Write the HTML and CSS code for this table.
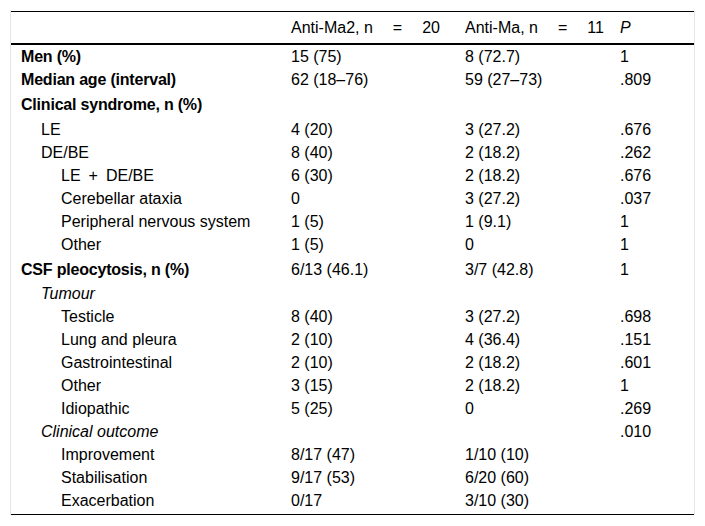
FILE: index.html
```html
<!DOCTYPE html>
<html lang="en">
<head>
<meta charset="utf-8">
<title>Anti-Ma2 vs Anti-Ma</title>
<link rel="stylesheet" href="styles.css">
</head>
<body>
<div class="frame">
  <table class="data">
    <colgroup>
      <col class="c1"><col class="c2"><col class="c3"><col class="c4">
    </colgroup>
    <thead>
      <tr>
        <th></th>
        <th>Anti-Ma2, n<span class="eq">=</span>20</th>
        <th>Anti-Ma, n<span class="eq">=</span>11</th>
        <th><i>P</i></th>
      </tr>
    </thead>
    <tbody>
      <tr class="b"><td>Men (%)</td><td>15 (75)</td><td>8 (72.7)</td><td>1</td></tr>
      <tr class="b"><td>Median age (interval)</td><td>62 (18–76)</td><td>59 (27–73)</td><td>.809</td></tr>
      <tr class="b tall"><td>Clinical syndrome, n (%)</td><td></td><td></td><td></td></tr>
      <tr><td class="l1">LE</td><td>4 (20)</td><td>3 (27.2)</td><td>.676</td></tr>
      <tr><td class="l1">DE/BE</td><td>8 (40)</td><td>2 (18.2)</td><td>.262</td></tr>
      <tr><td class="l2">LE<span class="plus">+</span>DE/BE</td><td>6 (30)</td><td>2 (18.2)</td><td>.676</td></tr>
      <tr><td class="l2">Cerebellar ataxia</td><td>0</td><td>3 (27.2)</td><td>.037</td></tr>
      <tr><td class="l2">Peripheral nervous system</td><td>1 (5)</td><td>1 (9.1)</td><td>1</td></tr>
      <tr><td class="l2">Other</td><td>1 (5)</td><td>0</td><td>1</td></tr>
      <tr class="b tall2"><td>CSF pleocytosis, n (%)</td><td>6/13 (46.1)</td><td>3/7 (42.8)</td><td>1</td></tr>
      <tr class="it"><td class="l1">Tumour</td><td></td><td></td><td></td></tr>
      <tr><td class="l2">Testicle</td><td>8 (40)</td><td>3 (27.2)</td><td>.698</td></tr>
      <tr><td class="l2">Lung and pleura</td><td>2 (10)</td><td>4 (36.4)</td><td>.151</td></tr>
      <tr><td class="l2">Gastrointestinal</td><td>2 (10)</td><td>2 (18.2)</td><td>.601</td></tr>
      <tr><td class="l2">Other</td><td>3 (15)</td><td>2 (18.2)</td><td>1</td></tr>
      <tr><td class="l2">Idiopathic</td><td>5 (25)</td><td>0</td><td>.269</td></tr>
      <tr class="it"><td class="l1">Clinical outcome</td><td></td><td></td><td>.010</td></tr>
      <tr><td class="l2">Improvement</td><td>8/17 (47)</td><td>1/10 (10)</td><td></td></tr>
      <tr><td class="l2">Stabilisation</td><td>9/17 (53)</td><td>6/20 (60)</td><td></td></tr>
      <tr class="last"><td class="l2">Exacerbation</td><td>0/17</td><td>3/10 (30)</td><td></td></tr>
    </tbody>
  </table>
</div>
</body>
</html>
```

FILE: styles.css
```css
html, body {
  margin: 0;
  padding: 0;
  background: #ffffff;
}

body {
  font-family: "Liberation Sans", Arial, Helvetica, sans-serif;
  font-size: 16px;
  color: #000000;
}

.frame {
  margin: 10px 0 0 10px;
  width: 683px;
  padding-top: 1px;
  border-left: 1px solid #e6e6e6;
  border-right: 1px solid #e6e6e6;
}

.data {
  width: 683px;
  border-collapse: separate;
  border-spacing: 0;
  table-layout: fixed;
}

.c1 { width: 270px; }
.c2 { width: 174px; }
.c3 { width: 155px; }
.c4 { width: 84px; }

.data th {
  font-weight: normal;
  text-align: left;
  padding: 6px 10px;
  line-height: 19px;
  border-top: 1px solid #000000;
  border-bottom: 2px solid #000000;
  white-space: nowrap;
}

.data td {
  padding: 2px 10px;
  line-height: 19px;
  text-align: left;
  vertical-align: middle;
  white-space: nowrap;
}

.eq {
  margin: 0 20px;
}

.plus {
  margin: 0 8px;
}

.b td:first-child {
  font-weight: bold;
  letter-spacing: -0.2px;
}

.it td:first-child {
  font-style: italic;
}

.tall td {
  padding-top: 4px;
  padding-bottom: 4px;
}

.tall2 td {
  padding-top: 4px;
  padding-bottom: 3px;
}

.l1 { padding-left: 30px !important; }
.l2 { padding-left: 50px !important; }

.last td {
  padding-bottom: 4px;
  border-bottom: 1px solid #000000;
}
```
